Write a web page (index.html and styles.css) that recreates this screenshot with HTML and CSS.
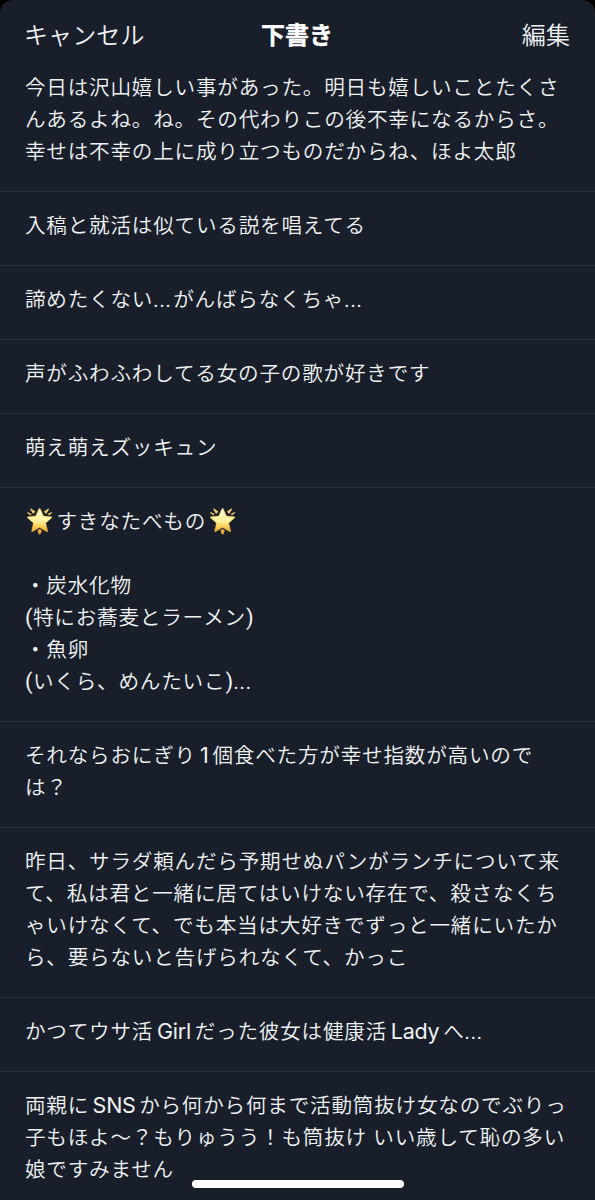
FILE: index.html
```html
<!DOCTYPE html>
<html lang="ja">
<head>
<meta charset="utf-8">
<title>下書き</title>
<link rel="stylesheet" href="styles.css">
</head>
<body>
<svg class="defs" width="0" height="0" aria-hidden="true">
  <defs>
    <linearGradient id="gold" x1="0" y1="0" x2="0" y2="1">
      <stop offset="0" stop-color="#fffbd0"/>
      <stop offset=".55" stop-color="#fff29a"/>
      <stop offset=".82" stop-color="#fac54a"/>
      <stop offset="1" stop-color="#e5a230"/>
    </linearGradient>
    <linearGradient id="ray" x1="0" y1="0" x2="0" y2="1">
      <stop offset="0" stop-color="#f3d568"/>
      <stop offset="1" stop-color="#e2a232"/>
    </linearGradient>
    <symbol id="star" viewBox="0 0 28 28">
      <path fill="url(#ray)" d="M4.4 1.8Q4.6.8 5.5 1.2L9.6 4.2Q8.8 6 7.2 6.6ZM22.8 1.2Q23.8.8 23.9 1.8L21.1 6.6Q19.5 6 18.7 4.2ZM1.2 5.6Q1.2 4.6 2.2 4.8L5.8 6.8Q5.4 7.8 4.4 8.1ZM26.1 4.8Q27.1 4.6 27.1 5.6L23.9 8.1Q22.9 7.8 22.5 6.8ZM14.1 22.2Q15.8 23 16.3 24.1L15.2 27.6Q14.1 28.4 13.1 27.6L11.9 24.1Q12.5 22.9 14.1 22.2Z"/>
      <path fill="url(#gold)" stroke="#f2c04a" stroke-width=".5" stroke-linejoin="round" d="M13.4 1.3Q14.1.1 14.8 1.3L18.1 8.9 26.2 9.6Q27.3 9.9 26.5 10.8L20.5 16.2 22.4 24.3Q22.5 25.6 21.4 25L14.1 20.8 6.9 25Q5.8 25.6 5.9 24.3L7.7 16.2 1.7 10.8Q.9 9.9 2 9.6L10.1 8.9Z"/>
    </symbol>
  </defs>
</svg>
<main class="sheet">
  <header class="bar">
    <span class="action">キャンセル</span>
    <h1 class="title">下書き</h1>
    <span class="action edit">編集</span>
  </header>
  <ul class="drafts">
    <li class="draft first">今日は沢山嬉しい事があった。明日も嬉しいことたくさ<br>んあるよね。ね。その代わりこの後不幸になるからさ。<br>幸せは不幸の上に成り立つものだからね、ほよ太郎</li>
    <li class="draft">入稿と就活は似ている説を唱えてる</li>
    <li class="draft">諦めたくない<span class="dots">...</span>がんばらなくちゃ<span class="dots">...</span></li>
    <li class="draft">声がふわふわしてる女の子の歌が好きです</li>
    <li class="draft">萌え萌えズッキュン</li>
    <li class="draft"><svg class="star" role="img" aria-label="🌟"><use href="#star"/></svg>すきなたべもの<svg class="star trailing" role="img" aria-label="🌟"><use href="#star"/></svg><br><br>・炭水化物<br><span class="paren">(</span>特にお蕎麦とラーメン<span class="paren">)</span><br>・魚卵<br><span class="paren">(</span>いくら、めんたいこ<span class="paren">)</span><span class="dots">...</span></li>
    <li class="draft">それならおにぎり<span class="latin digit">1</span>個食べた方が幸せ指数が高いので<br>は？</li>
    <li class="draft">昨日、サラダ頼んだら予期せぬパンがランチについて来<br>て、私は君と一緒に居てはいけない存在で、殺さなくち<br>ゃいけなくて、でも本当は大好きでずっと一緒にいたか<br>ら、要らないと告げられなくて、かっこ</li>
    <li class="draft">かつてウサ活<span class="latin girl">Girl</span>だった彼女は健康活<span class="latin lady">Lady</span>へ<span class="dots">...</span></li>
    <li class="draft">両親に<span class="latin sns">SNS</span>から何から何まで活動筒抜け女なのでぶりっ<br>子もほよ〜？もりゅうう！も筒抜け<span class="gap"> </span>いい歳して恥の多い<br>娘ですみません</li>
  </ul>
  <div class="home"></div>
</main>
</body>
</html>
```
FILE: styles.css
```css
* { box-sizing: border-box; }
body {
  margin: 0;
  background: #000;
  font-family: "Noto Sans CJK JP", sans-serif;
  color: #f0f3f5;
}
.defs { position: absolute; }
.sheet {
  position: relative;
  height: 1200px;
  overflow: hidden;
  background: #181f2a;
  border-radius: 13px 13px 0 0;
}
.bar {
  display: grid;
  grid-template-columns: 1fr auto 1fr;
  align-items: center;
  height: 52px;
  padding: 15px 25px 0 24px;
  line-height: 36px;
}
.action { font-size: 24px; font-weight: 350; letter-spacing: .1px; }
.edit { text-align: right; }
.title {
  margin: 0;
  font-size: 24px;
  font-weight: 700;
  -webkit-text-stroke: .4px #fff;
  color: #fff;
}
.drafts { margin: 0; padding: 0; list-style: none; }
.draft {
  padding: 16px 0 25px 25px;
  border-bottom: 1px solid #29313b;
  font-size: 20.6px;
  font-weight: 350;
  letter-spacing: .78px;
  line-height: 32px;
  white-space: nowrap;
}
.first { padding-top: 18px; }
.draft:last-child { border-bottom: 0; }
.latin, .dots, .paren {
  display: inline-block;
  font-family: Inter, sans-serif;
  font-weight: 400;
  line-height: 1;
  letter-spacing: 0;
}
.latin { text-align: center; font-size: 21.5px; letter-spacing: -.2px; }
.digit { width: 16.5px; }
.girl { width: 41.5px; }
.lady { width: 56px; }
.sns { width: 50px; }
.dots {
  width: 20px;
  font-family: Roboto, sans-serif;
  font-size: 20px;
  letter-spacing: .9px;
  padding-left: 0;
}
.paren { width: 8px; font-family: Roboto, sans-serif; font-size: 22px; }
.gap { word-spacing: 1px; }
.star {
  width: 27px;
  height: 28px;
  margin: 0 3.5px 0 1px;
  vertical-align: -6px;
}
.trailing { margin-left: 2.5px; }
.home {
  position: absolute;
  left: 192px;
  bottom: 12px;
  width: 212px;
  height: 8px;
  border-radius: 4px;
  background: #fff;
}
```
